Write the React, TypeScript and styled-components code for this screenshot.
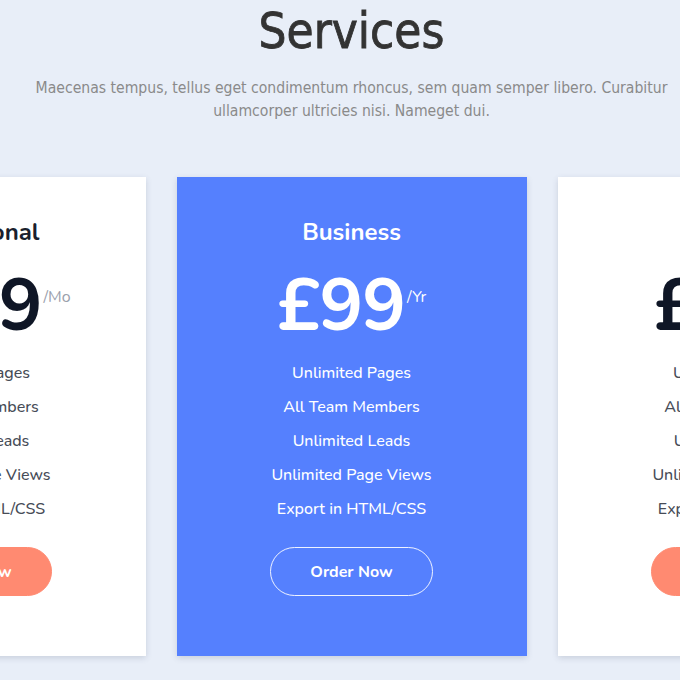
import React from "react";
import styled, { createGlobalStyle } from "styled-components";

const Global = createGlobalStyle`
  html, body { margin: 0; padding: 0; background: #e8eef8; overflow: hidden; }
  * { box-sizing: border-box; }
`;

const Page = styled.div`
  width: 703px;
  height: 680px;
  display: flex;
  flex-direction: column;
  align-items: center;
  background: #e8eef8;
`;

const Title = styled.h1`
  margin: 0;
  padding-top: 2px;
  font-family: "DejaVu Sans Condensed", "Liberation Sans", sans-serif;
  font-weight: 400;
  font-size: 49px;
  line-height: 60px;
  color: #333333;
  -webkit-text-stroke: 0.8px #333333;
`;

const Lead = styled.p`
  margin: 15px 0 0;
  width: 660px;
  text-align: center;
  font-family: "DejaVu Sans Condensed", "Liberation Sans", sans-serif;
  font-size: 15.6px;
  line-height: 23px;
  color: #8a8a8a;
`;

const Row = styled.div`
  margin-top: 54px;
  display: flex;
  justify-content: center;
  gap: 31px;
  width: 1112px;
`;

const Card = styled.div<{ $featured?: boolean }>`
  flex: 0 0 350px;
  height: 479px;
  background: ${(p) => (p.$featured ? "#5580fe" : "#ffffff")};
  box-shadow: 0 2px 6px rgba(60, 70, 100, 0.18);
  display: flex;
  flex-direction: column;
  align-items: center;
  padding-top: 40px;
  font-family: "Nunito", "Lato", "Noto Sans", sans-serif;
  color: ${(p) => (p.$featured ? "#ffffff" : "#1a1f2e")};
`;

const PlanName = styled.h2`
  margin: 0;
  font-size: 24px;
  line-height: 30px;
  font-weight: 700;
`;

const Price = styled.div`
  margin-top: 19px;
  display: flex;
  align-items: flex-start;
  height: 80px;
`;

const Amount = styled.span<{ $featured?: boolean }>`
  font-size: 73px;
  line-height: 80px;
  font-weight: 700;
  color: ${(p) => (p.$featured ? "#ffffff" : "#0f1626")};
  letter-spacing: -1px;
`;

const Period = styled.span<{ $featured?: boolean }>`
  margin-top: 21px;
  margin-left: 2px;
  font-size: 16px;
  line-height: 20px;
  color: ${(p) => (p.$featured ? "#ffffff" : "#9aa0ac")};
`;

const Features = styled.ul`
  list-style: none;
  margin: 10px 0 0;
  padding: 0;
  display: flex;
  flex-direction: column;
  align-items: center;
`;

const Feature = styled.li<{ $featured?: boolean }>`
  font-size: 16px;
  line-height: 34px;
  font-weight: 500;
  color: ${(p) => (p.$featured ? "#ffffff" : "#474c57")};
`;

const Button = styled.button<{ $featured?: boolean }>`
  margin-top: 21px;
  width: 163px;
  height: 49px;
  border-radius: 25px;
  border: 1px solid ${(p) => (p.$featured ? "rgba(255,255,255,0.9)" : "#ff8a71")};
  background: ${(p) => (p.$featured ? "transparent" : "#ff8a71")};
  color: #ffffff;
  font-family: "Nunito", "Lato", "Noto Sans", sans-serif;
  font-size: 16px;
  font-weight: 700;
  cursor: pointer;
`;

const plans = [
  { name: "Professional", price: "£149", period: "/Mo", featured: false },
  { name: "Business", price: "£99", period: "/Yr", featured: true },
  { name: "Ultimate", price: "£29", period: "/Mo", featured: false },
];

const features = [
  "Unlimited Pages",
  "All Team Members",
  "Unlimited Leads",
  "Unlimited Page Views",
  "Export in HTML/CSS",
];

export default function App() {
  return (
    <>
      <Global />
      <Page>
        <Title>Services</Title>
        <Lead>
          Maecenas tempus, tellus eget condimentum rhoncus, sem quam semper libero. Curabitur
          ullamcorper ultricies nisi. Nameget dui.
        </Lead>
        <Row>
          {plans.map((p) => (
            <Card key={p.name} $featured={p.featured}>
              <PlanName>{p.name}</PlanName>
              <Price>
                <Amount $featured={p.featured}>{p.price}</Amount>
                <Period $featured={p.featured}>{p.period}</Period>
              </Price>
              <Features>
                {features.map((f) => (
                  <Feature key={f} $featured={p.featured}>
                    {f}
                  </Feature>
                ))}
              </Features>
              <Button $featured={p.featured}>Order Now</Button>
            </Card>
          ))}
        </Row>
      </Page>
    </>
  );
}
